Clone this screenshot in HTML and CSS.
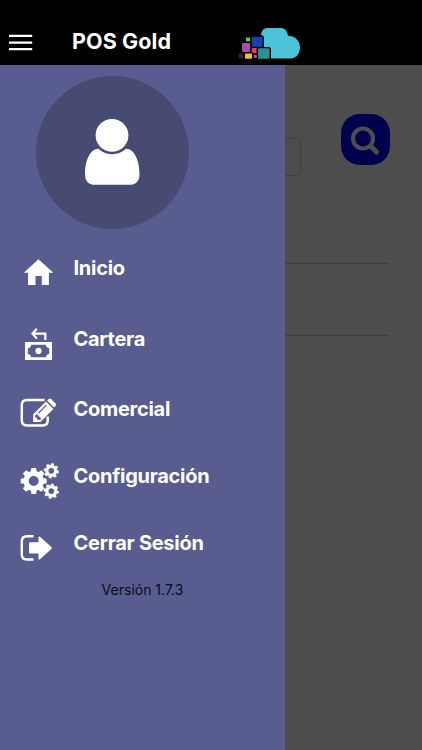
FILE: index.html
```
<!DOCTYPE html>
<html lang="es">
<head>
<meta charset="utf-8">
<meta name="viewport" content="width=device-width">
<title>POS Gold</title>
<link rel="stylesheet" href="styles.css">
</head>
<body>
<header class="topbar">
  <svg class="burger" viewBox="0 0 24 18"><path d="M0 1.900H23.200M0 8.700H23.200M0 15.200H23.200"/></svg>
  <h1 class="title">POS Gold</h1>
  <svg class="logo" viewBox="230 20 80 44">
    <path class="cloud" d="M261 40V34Q262.500 28 267 28H282Q286.500 28.500 288 35.700C295 35.500 300 41 300 47C300 54 296 58.500 290 58.500H261Z"/>
    <g stroke="#000" stroke-width="1.400">
      <rect x="245.200" y="36.700" width="5.800" height="5.800" rx="1.500" fill="#62c452"/>
      <rect x="251" y="36" width="12.300" height="11.800" rx="2" fill="#1541b1"/>
      <rect x="241.300" y="42.300" width="9.700" height="10.300" rx="2" fill="#a84caa"/>
      <rect x="251" y="47.400" width="6.800" height="6.800" rx="1.800" fill="#ef3c5d"/>
      <rect x="257.300" y="47.600" width="13" height="12.500" rx="2" fill="#2d918f"/>
      <rect x="238" y="52.800" width="6.200" height="6.400" rx="1.800" fill="#4c2029"/>
      <rect x="244.300" y="52.700" width="8.400" height="7" rx="1.500" fill="#f4bd35"/>
      <rect x="253" y="54" width="4.600" height="4.600" rx="1.500" fill="#a45597"/>
    </g>
    <path d="M236 58.700H273V62H236Z"/>
  </svg>
</header>
<main class="body">
  <nav class="drawer">
    <div class="avatar">
      <svg viewBox="30 70 165 165">
        <circle cx="112" cy="135.300" r="16.400"/>
        <path d="M98.500 148.800C90 148.800 85 161 85 174Q85 184.800 95 184.800H129.500Q139.500 184.800 139.500 174C139.500 161 134.500 148.800 126 148.800C123 151.600 118 154.200 112 154.200S101.500 151.600 98.500 148.800Z"/>
      </svg>
    </div>
    <ul class="menu">
      <li class="item inicio">
        <svg viewBox="18 246 44 50"><path d="M38.500 259.200L53.300 272.800H48.900V285H41.800V276H35.500V285H28V272.800H23.800Z"/></svg>
        <span>Inicio</span>
      </li>
      <li class="item cartera">
        <svg viewBox="18 317 44 50">
          <path class="line" stroke-width="2.200" d="M36.800 328.800L32.500 333.600L36.800 338.400M32.500 333.600H45.300V340"/>
          <path fill-rule="evenodd" d="M25 342H52V360H25ZM31.300 344.700Q30.800 347.800 27.800 348.200V354Q30.800 354.300 31.300 357.300H45.800Q46.300 354.300 49.200 354V348.200Q46.300 347.800 45.800 344.700Z"/>
          <circle cx="38.500" cy="350.900" r="3.100"/>
        </svg>
        <span>Cartera</span>
      </li>
      <li class="item comercial">
        <svg viewBox="18 387 44 50">
          <path class="line" stroke-width="2.500" d="M44.500 400H27Q21.800 400 21.800 405V420.500Q21.800 425.500 27 425.500H42.500Q47.700 425.500 47.700 420.500V416.500"/>
          <path fill-rule="evenodd" d="M33.200 422V414.300L46 401.500L53.400 408.900L40.300 422ZM35.300 415.400L34.900 417.300H36.700V419.500H38.900V420.200L40.500 419.700L41.200 418.500L36.700 414ZM38.100 412.600L38.900 413.400L46.700 405.600L45.900 404.800Z"/>
          <path d="M47.100 400.400L48.700 398.900Q50 398 51.300 399.200L55.700 403.600Q56.500 404.800 55.500 406L54 407.500Z"/>
        </svg>
        <span>Comercial</span>
      </li>
      <li class="item config">
        <svg viewBox="18 455 44 50">
          <defs>
            <g id="gear">
              <circle r="7.600" fill="none" stroke="#fff" stroke-width="5.200"/>
              <path id="teeth" d="M-3 -9L-2.300 -13H2.300L3 -9ZM-3 9L-2.300 13H2.300L3 9ZM-9 -3L-13 -2.300V2.300L-9 3ZM9 -3L13 -2.300V2.300L9 3Z"/>
              <use href="#teeth" transform="rotate(45)"/>
            </g>
          </defs>
          <use href="#gear" transform="translate(33.700 481)"/>
          <use href="#gear" transform="translate(51.300 470.800) scale(.58) rotate(10)"/>
          <use href="#gear" transform="translate(51.300 491.200) scale(.58) rotate(10)"/>
        </svg>
        <span>Configuración</span>
      </li>
      <li class="item salir">
        <svg viewBox="18 522 44 50">
          <path class="line" stroke-width="2.400" d="M33.500 536.300H27Q21.800 536.300 21.800 541.300V554.500Q21.800 559.500 27 559.500H33.500"/>
          <path d="M29 543.200Q29 542.300 30 542.300H38.500V537.400Q38.700 536 40 536.800L51.600 547.300Q52.200 548 51.600 548.800L40 559.300Q38.700 560 38.500 558.700V553.500H30Q29 553.500 29 552.600Z"/>
        </svg>
        <span>Cerrar Sesión</span>
      </li>
    </ul>
    <p class="version">Versión 1.7.3</p>
  </nav>
  <section class="content">
    <div class="search">
      <div class="field"></div>
      <div class="button">
        <svg viewBox="0 0 49 51"><circle cx="22" cy="24.500" r="10"/><path class="handle" d="M30 32.500L35.500 38"/></svg>
      </div>
    </div>
    <hr class="rule first">
    <hr class="rule">
  </section>
</main>
</body>
</html>
```
FILE: styles.css
```
* { box-sizing: border-box; }
body {
  margin: 0;
  width: 422px;
  height: 750px;
  overflow: hidden;
  background: #4d4d4d;
  font-family: Inter, "Liberation Sans", sans-serif;
}
svg { display: block; }
.topbar {
  display: flex;
  height: 65px;
  padding-top: 20px;
  background: #000;
}
.burger {
  width: 24px;
  height: 18px;
  margin: 14px 0 0 9px;
  fill: none;
  stroke: #fff;
  stroke-width: 2.3;
}
.title {
  width: 158px;
  margin: 0 0 0 39px;
  color: #fff;
  font-size: 21.500px;
  font-weight: 700;
  letter-spacing: 0.1px;
  line-height: 43px;
  white-space: nowrap;
}
.logo { width: 80px; height: 44px; }
.cloud { fill: #4cc3d9; }
.body { display: flex; height: 685px; }
.drawer {
  width: 285px;
  padding-top: 10.500px;
  background: #585c8e;
}
.avatar {
  width: 153px;
  height: 153px;
  margin-left: 36px;
  border-radius: 50%;
  background: #474b71;
}
.avatar svg {
  width: 165px;
  height: 165px;
  margin-left: -6px;
  transform: translateY(-6px);
  fill: #fff;
}
.menu {
  margin: 17.500px 0 0;
  padding: 0 0 0 18px;
  list-style: none;
}
.item {
  display: flex;
  color: #fff;
  font-size: 20px;
  font-weight: 700;
  letter-spacing: -0.28px;
  line-height: 44px;
  white-space: nowrap;
}
.item svg { width: 44px; height: 50px; margin-right: 11.500px; fill: #fff; overflow: visible; }
.item .line { fill: none; stroke: #fff; }
.inicio { height: 71px; }
.cartera { height: 70px; }
.comercial { height: 68px; }
.config { height: 67px; line-height: 43px; }
.salir { height: 58px; line-height: 43px; }
.version {
  margin: 0;
  color: #0b0b14;
  font-size: 14px;
  line-height: 20px;
  text-align: center;
}
.content { width: 137px; padding-top: 49px; }
.search { display: flex; height: 51px; }
.field {
  width: 16px;
  height: 38px;
  margin-top: 24px;
  border: 1px solid #3f3f3f;
  border-left: 0;
  border-radius: 0 5px 5px 0;
}
.button {
  width: 49px;
  height: 51px;
  margin-left: 39.500px;
  border-radius: 19px;
  background: #00004f;
}
.button svg {
  width: 49px;
  height: 51px;
  fill: none;
  stroke: #4d4d4d;
  stroke-width: 4.200;
  stroke-linecap: round;
}
.button .handle { stroke-width: 5; }
.rule {
  width: 103px;
  height: 1px;
  margin: 0;
  border: 0;
  background: #3c3c3e;
}
.first { margin: 98px 0 71px; }
```
